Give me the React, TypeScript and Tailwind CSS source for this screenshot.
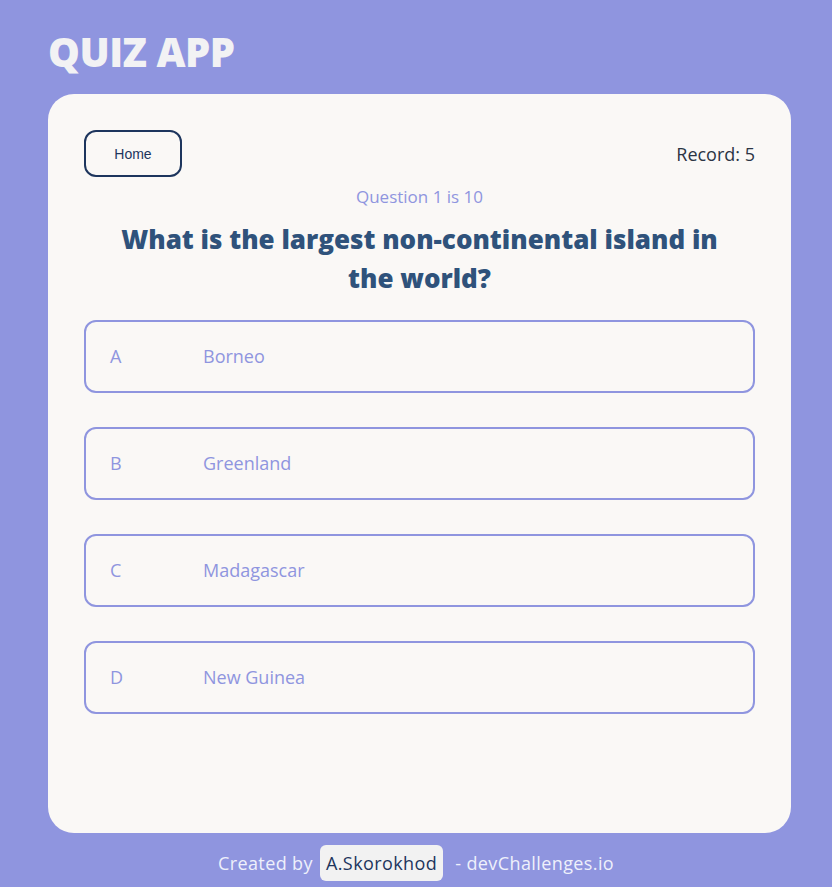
import React from "react";

const options = [
  { letter: "A", text: "Borneo" },
  { letter: "B", text: "Greenland" },
  { letter: "C", text: "Madagascar" },
  { letter: "D", text: "New Guinea" },
];

export default function App() {
  return (
    <div className="min-h-[887px] w-full bg-[#8f95df] px-12 pt-[26px] font-['Open_Sans',sans-serif]">
      <h1 className="text-[40px] font-extrabold leading-[52px] tracking-[-0.5px] text-[#f2f2f4]">QUIZ APP</h1>

      <div className="mt-4 h-[739px] w-[743px] rounded-[26px] bg-[#faf8f6] px-9 pt-9">
        <div className="flex items-center justify-between">
          <button className="h-[47px] w-[98px] rounded-xl border-2 border-[#1d355d] font-['Liberation_Sans',sans-serif] text-sm text-[#1d355d]">
            Home
          </button>
          <span className="text-lg text-[#2b3444]">Record: 5</span>
        </div>

        <p className="mt-[7px] text-center text-[17px] text-[#8f95df]">Question 1 is 10</p>
        <h2 className="mx-auto mt-[10px] max-w-[610px] text-center text-[26px] font-extrabold leading-[39px] text-[#2f527b]">
          What is the largest non-continental island in the world?
        </h2>

        <div className="mt-[22px] flex flex-col gap-[34px]">
          {options.map((o) => (
            <button
              key={o.letter}
              className="flex h-[73px] items-center rounded-xl border-2 border-[#8f95df] px-6 text-left text-lg text-[#8f95df]"
            >
              <span className="w-[93px]">{o.letter}</span>
              <span>{o.text}</span>
            </button>
          ))}
        </div>
      </div>

      <footer className="flex items-center justify-center gap-[7px] pt-3 text-lg tracking-[0.4px] text-[#eef0fb]">
        <span>Created by</span>
        <span className="rounded-md bg-[#f2f2f2] px-1.5 py-1 text-[#1d355d]">A.Skorokhod</span>
        <span className="ml-[5px]">- devChallenges.io</span>
      </footer>
    </div>
  );
}
